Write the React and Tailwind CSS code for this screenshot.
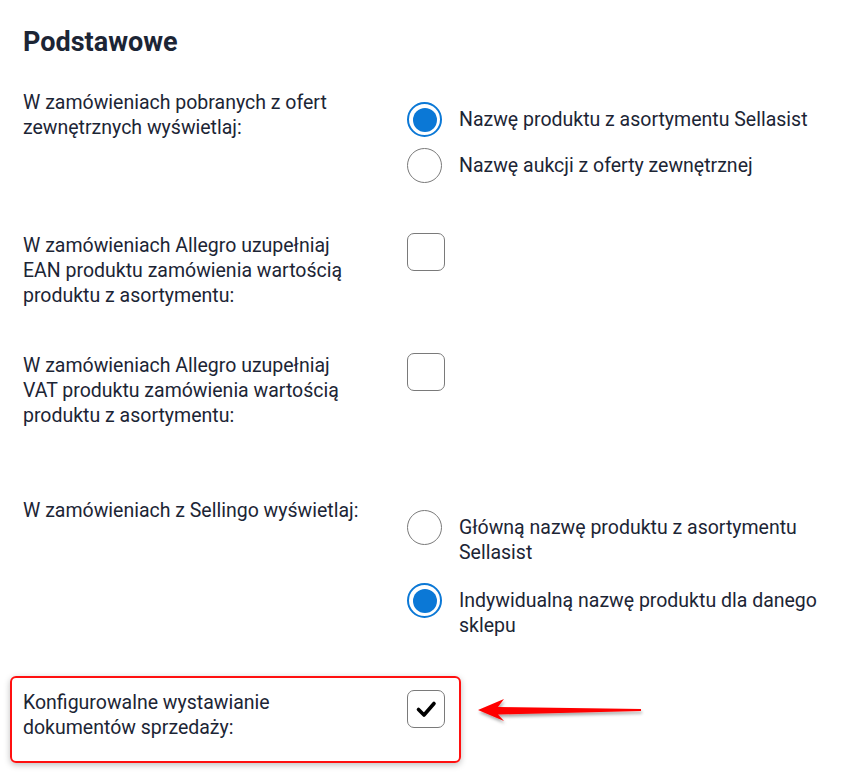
import { useState } from "react";

const Radio = ({ checked }) =>
  checked ? (
    <span className="flex h-[35px] w-[35px] shrink-0 items-center justify-center rounded-full border-2 border-[#0b78d6] bg-white">
      <span className="h-[24px] w-[24px] rounded-full bg-[#0b78d6]" />
    </span>
  ) : (
    <span className="h-[35px] w-[35px] shrink-0 rounded-full border-[1.5px] border-[#7a7a7a] bg-white" />
  );

const Checkbox = ({ checked }) => (
  <span className="flex h-[38px] w-[38px] shrink-0 items-center justify-center rounded-[7px] border border-[#7a7a7a] bg-white">
    {checked && (
      <svg width="22" height="22" viewBox="0 0 22 22">
        <path d="M3.5 11.5 L9 17 L19 5.5" fill="none" stroke="#000" strokeWidth="3.6" strokeLinecap="round" strokeLinejoin="round" />
      </svg>
    )}
  </span>
);

const RadioOption = ({ checked, children }) => (
  <label className="flex items-start gap-[17px]">
    <Radio checked={checked} />
    <span className="pt-[5px]">{children}</span>
  </label>
);

const Row = ({ label, children, className = "" }) => (
  <div className={`flex ${className}`}>
    <div className="w-[384px] shrink-0 pr-2">{label}</div>
    <div>{children}</div>
  </div>
);

const App = () => {
  const [first] = useState("sellasist");
  const [second] = useState("individual");

  return (
    <div className="min-h-[773px] bg-white font-['Roboto',sans-serif] text-[19.5px] leading-[25px] text-[#1c2535]">
      <div className="px-[23px] pt-[26px]">
        <h2 className="text-[27px] font-bold leading-[32px] text-[#1c2535]">Podstawowe</h2>

        <Row
          className="mt-[32px]"
          label={
            <>
              W zamówieniach pobranych z ofert
              <br />
              zewnętrznych wyświetlaj:
            </>
          }
        >
          <div className="flex flex-col gap-[11px] pt-[12px]">
            <RadioOption checked={first === "sellasist"}>Nazwę produktu z asortymentu Sellasist</RadioOption>
            <RadioOption checked={first === "external"}>Nazwę aukcji z oferty zewnętrznej</RadioOption>
          </div>
        </Row>

        <Row
          className="mt-[50px]"
          label={
            <>
              W zamówieniach Allegro uzupełniaj
              <br />
              EAN produktu zamówienia wartością
              <br />
              produktu z asortymentu:
            </>
          }
        >
          <Checkbox />
        </Row>

        <Row
          className="mt-[45px]"
          label={
            <>
              W zamówieniach Allegro uzupełniaj
              <br />
              VAT produktu zamówienia wartością
              <br />
              produktu z asortymentu:
            </>
          }
        >
          <Checkbox />
        </Row>

        <Row className="mt-[70px]" label="W zamówieniach z Sellingo wyświetlaj:">
          <div className="flex w-[420px] flex-col gap-[18px] pt-[12px]">
            <RadioOption checked={second === "main"}>
              Główną nazwę produktu z asortymentu
              <br />
              Sellasist
            </RadioOption>
            <RadioOption checked={second === "individual"}>
              Indywidualną nazwę produktu dla danego
              <br />
              sklepu
            </RadioOption>
          </div>
        </Row>
      </div>

      <div className="mt-[38px] flex items-center">
        <div className="ml-[10px] flex w-[451px] rounded-[6px] border-2 border-[#ff1010] pb-[21px] pl-[11px] pr-[15px] pt-[12px] shadow-[0_2px_6px_rgba(0,0,0,0.25)]">
          <div className="w-[384px] shrink-0 pr-2">
            Konfigurowalne wystawianie
            <br />
            dokumentów sprzedaży:
          </div>
          <Checkbox checked />
        </div>
        <svg width="180" height="40" viewBox="0 0 180 40" className="-mt-[24px] ml-[6px]">
          <defs>
            <filter id="sh" x="-10%" y="-30%" width="120%" height="180%">
              <feDropShadow dx="1" dy="2.5" stdDeviation="1.8" floodColor="#000" floodOpacity="0.35" />
            </filter>
          </defs>
          <path
            d="M11 22 L37 11 L31 19 L174 21 L174 23 L31 26.5 L37 33 Z"
            fill="#ff0000"
            filter="url(#sh)"
          />
        </svg>
      </div>
    </div>
  );
};

export default App;
